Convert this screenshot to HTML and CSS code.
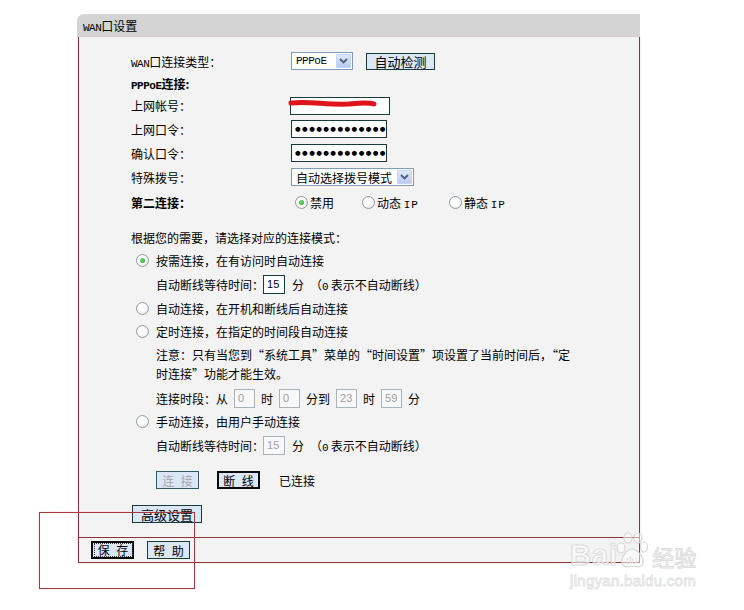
FILE: index.html
```html
<!DOCTYPE html>
<html lang="zh-CN">
<head>
<meta charset="utf-8">
<title>WAN口设置</title>
<link rel="stylesheet" href="styles.css">
</head>
<body>
<div class="page">
  <div class="panel">
    <div class="head"><span class="lat">WAN</span>口设置</div>
    <div class="body">
      <div class="main">
        <div class="row h24">
          <span class="lbl"><span class="lat">WAN</span>口连接类型：</span>
          <div class="ctl">
            <div class="sel w62"><span class="selv lat">PPPoE</span><span class="arr"><svg width="9" height="6" viewBox="0 0 9 6"><path d="M1 1 L4.5 4.5 L8 1" fill="none" stroke="#4d6185" stroke-width="1.8"/></svg></span></div>
            <span class="btn detect">自动检测</span>
          </div>
        </div>
        <div class="row h21">
          <span class="lbl b"><span class="lat">PPPoE</span>连接:</span>
        </div>
        <div class="row h23">
          <span class="lbl">上网帐号：</span>
          <div class="ctl">
            <div class="inp acct">
              <svg class="scribble" width="90" height="10" viewBox="0 0 90 10"><path d="M3 4 C20 2 40 6 60 5 C72 4 80 3 86 5" fill="none" stroke="#e0141a" stroke-width="5" stroke-linecap="round"/></svg>
            </div>
          </div>
        </div>
        <div class="row h24">
          <span class="lbl">上网口令：</span>
          <div class="ctl"><div class="inp pw"><span class="dotsw">●●●●●●●●●●●●●</span></div></div>
        </div>
        <div class="row h24">
          <span class="lbl">确认口令：</span>
          <div class="ctl"><div class="inp pw"><span class="dotsw">●●●●●●●●●●●●●</span></div></div>
        </div>
        <div class="row h24">
          <span class="lbl">特殊拨号：</span>
          <div class="ctl">
            <div class="sel w123"><span class="selv">自动选择拨号模式</span><span class="arr"><svg width="9" height="6" viewBox="0 0 9 6"><path d="M1 1 L4.5 4.5 L8 1" fill="none" stroke="#4d6185" stroke-width="1.8"/></svg></span></div>
          </div>
        </div>
        <div class="row h27">
          <span class="lbl b">第二连接：</span>
          <div class="ctl second">
            <span class="radio on"></span><span class="rl">禁用</span>
            <span class="radio r2"></span><span class="rl">动态 <span class="lat">IP</span></span>
            <span class="radio r3"></span><span class="rl">静态 <span class="lat">IP</span></span>
          </div>
        </div>

        <div class="row h22 mt10">
          <span class="intro">根据您的需要，请选择对应的连接模式：</span>
        </div>
        <div class="row h24 opt">
          <span class="radio on"></span><span class="ol">按需连接，在有访问时自动连接</span>
        </div>
        <div class="row h24 sub">
          <span>自动断线等待时间：</span><span class="box">15</span><span class="unit">分</span><span class="note">（<span class="lat">0</span> 表示不自动断线）</span>
        </div>
        <div class="row h24 opt">
          <span class="radio"></span><span class="ol">自动连接，在开机和断线后自动连接</span>
        </div>
        <div class="row h23 opt">
          <span class="radio"></span><span class="ol">定时连接，在指定的时间段自动连接</span>
        </div>
        <p class="warn">注意：只有当您到“系统工具”菜单的“时间设置”项设置了当前时间后，“定<br>时连接”功能才能生效。</p>
        <div class="row h22 sub times">
          <span>连接时段：从</span><span class="box dis">0</span><span>时</span><span class="box dis">0</span><span>分到</span><span class="box dis">23</span><span>时</span><span class="box dis">59</span><span>分</span>
        </div>
        <div class="row h24 opt">
          <span class="radio"></span><span class="ol">手动连接，由用户手动连接</span>
        </div>
        <div class="row h24 sub">
          <span>自动断线等待时间：</span><span class="box dis">15</span><span class="unit">分</span><span class="note">（<span class="lat">0</span> 表示不自动断线）</span>
        </div>
        <div class="row h22 sub btns mt12">
          <span class="btn small dis">连 接</span>
          <span class="btn small focus">断 线</span>
          <span class="status">已连接</span>
        </div>
        <div class="row h22 adv mt12">
          <span class="btn advb">高级设置</span>
        </div>
      </div>
      <div class="foot">
        <span class="btn small focus save"><span class="dots">保 存</span></span>
        <span class="btn small">帮 助</span>
      </div>
    </div>
  </div>
  <div class="annot"></div>
  <div class="wm">
    <div class="wm-top">
      <span class="wm-bai">Bai</span>
      <svg class="paw" width="32" height="38" viewBox="0 0 32 38">
        <g fill="rgba(255,255,255,0.5)" stroke="#d6d6d6" stroke-width="1.2">
          <ellipse cx="5" cy="16" rx="4" ry="5"/>
          <ellipse cx="12" cy="6" rx="4" ry="5"/>
          <ellipse cx="22" cy="6" rx="4" ry="5"/>
          <ellipse cx="28" cy="15" rx="3.5" ry="5"/>
          <path d="M16 17 C10 17 5 26 6 31 C7 36 12 35 16 34 C20 35 26 36 27 31 C28 26 22 17 16 17 Z"/>
        </g>
        <text x="10" y="32" font-family="Liberation Sans, sans-serif" font-size="10" fill="#e2e2e2">du</text>
      </svg>
      <span class="wm-jy">经验</span>
    </div>
    <div class="wm-url">jingyan.baidu.com</div>
  </div>
</div>
</body>
</html>
```
FILE: styles.css
```css
html, body {
  margin: 0;
  padding: 0;
  background: #ffffff;
}
body {
  font-family: "Noto Sans CJK SC", "Liberation Sans", sans-serif;
  font-size: 12px;
  color: #000;
}
.page {
  position: relative;
  width: 744px;
  height: 610px;
  padding: 14px 0 0 77px;
  box-sizing: border-box;
}
.lat {
  font-family: "Liberation Mono", monospace;
  font-size: 11px;
  letter-spacing: -0.5px;
}
.panel {
  width: 563px;
}
.head {
  height: 23px;
  line-height: 23px;
  background: #d4d4d4;
  border-top-left-radius: 7px;
  padding-left: 6px;
  font-size: 12px;
}
.body {
  margin-left: 1px;
  width: 562px;
  box-sizing: border-box;
  border-left: 1px solid #8a3434;
  border-right: 1px solid #8a3434;
  border-bottom: 1px solid #8a3434;
  background: #f3f3f3;
  box-shadow: 0 0 1px rgba(230, 120, 120, 0.6);
}
.main {
  height: 488px;
  border-bottom: 1px solid #8a3434;
  padding-top: 12px;
}
.row {
  display: flex;
  align-items: center;
  padding-left: 52px;
}
.h21 { height: 21px; }
.h22 { height: 22px; }
.h23 { height: 23px; }
.h24 { height: 24px; }
.h27 { height: 27px; }
.mt10 { margin-top: 10px; }
.mt12 { margin-top: 12px; }
.lbl {
  width: 160px;
  flex: none;
}
.b { font-weight: bold; }
.ctl {
  display: flex;
  align-items: center;
}
.sel {
  display: flex;
  align-items: center;
  justify-content: space-between;
  height: 18px;
  box-sizing: border-box;
  border: 1px solid #7f9db9;
  background: #fff;
  padding: 0 1px 0 4px;
}
.w62 { width: 62px; }
.w123 { width: 123px; }
.selv { white-space: nowrap; }
.arr {
  width: 15px;
  height: 14px;
  background: linear-gradient(#dfe8fb, #b8cbf0);
  border: 1px solid #c3d3fd;
  box-sizing: border-box;
  display: flex;
  align-items: center;
  justify-content: center;
  border-radius: 1px;
}
.btn {
  display: inline-flex;
  align-items: center;
  justify-content: center;
  box-sizing: border-box;
  height: 18px;
  background: #dbe6f7;
  border: 1px solid #173a3a;
  font-size: 12px;
  white-space: nowrap;
}
.detect {
  width: 69px;
  height: 17px;
  margin-left: 13px;
  font-size: 13px;
}
.inp {
  position: relative;
  height: 18px;
  box-sizing: border-box;
  background: #fff;
  border: 1px solid #173a3a;
  display: flex;
  align-items: center;
}
.acct { width: 100px; margin-left: -1px; }
.scribble {
  position: absolute;
  left: -3px;
  top: 1px;
}
.pw {
  width: 96px;
  padding-left: 3px;
}
.dotsw {
  font-family: "DejaVu Sans", sans-serif;
  font-size: 6.5px;
  letter-spacing: 1.4px;
  margin-right: -1.4px;
  white-space: nowrap;
}
.radio {
  width: 13px;
  height: 13px;
  box-sizing: border-box;
  border-radius: 50%;
  border: 1px solid #8e9aa6;
  background: radial-gradient(circle at 40% 40%, #ffffff 30%, #e4e4e0 100%);
  flex: none;
  display: inline-flex;
  align-items: center;
  justify-content: center;
}
.radio.on::after {
  content: "";
  width: 5px;
  height: 5px;
  border-radius: 50%;
  background: radial-gradient(circle at 40% 40%, #6fdc6f, #21a121);
}
.second { padding-left: 4px; }
.rl { margin-left: 2px; }
.r2 { margin-left: 28px; }
.r3 { margin-left: 30px; }
.second .lat { letter-spacing: 1px; }
.opt { padding-left: 57px; }
.ol { margin-left: 7px; }
.sub { padding-left: 77px; }
.box {
  display: inline-flex;
  align-items: center;
  width: 22px;
  height: 19px;
  box-sizing: border-box;
  background: #fff;
  border: 1px solid #173a3a;
  padding-left: 3px;
  font-family: "Liberation Sans", sans-serif;
  font-size: 11px;
}
.box.dis {
  border-color: #a8b4bc;
  color: #a0a0a0;
  background: #f8f8f8;
}
.sub .box { margin-left: -1px; }
.unit { margin-left: 7px; }
.note { margin-left: 6px; }
.warn {
  margin: 0 0 0 77px;
  line-height: 19px;
  padding-top: 2px;
  height: 42px;
  white-space: nowrap;
}
.times { gap: 6px; }
.times .box { margin-left: 0; width: 21px; }
.small {
  width: 43px;
  height: 18px;
  letter-spacing: 2px;
  padding-left: 2px;
}
.btn.dis {
  color: #a8a8a8;
  border-color: #2f5a64;
}
.btn.focus {
  border: 2px solid #0a0a0a;
}
.btns .focus { margin-left: 18px; }
.status { margin-left: 19px; }
.adv { padding-left: 53px; }
.advb {
  width: 70px;
  font-size: 13px;
}
.foot {
  height: 24px;
  display: flex;
  align-items: center;
  padding-left: 12px;
  gap: 13px;
}
.save { width: 43px; }
.dots {
  border: 1px dotted #333;
  padding: 0 2px 0 3px;
  line-height: 12px;
}
.annot {
  position: absolute;
  left: 39px;
  top: 512px;
  width: 156px;
  height: 77px;
  box-sizing: border-box;
  border: 1px solid #a23c3c;
  box-shadow: 0 0 1px rgba(230, 120, 120, 0.6);
}
.wm {
  position: absolute;
  left: 570px;
  top: 530px;
  width: 140px;
}
.wm-top {
  display: flex;
  align-items: flex-end;
  height: 40px;
}
.wm-bai {
  font-family: "Liberation Sans", sans-serif;
  font-weight: bold;
  font-size: 29px;
  line-height: 30px;
  color: rgba(255, 255, 255, 0.55);
  -webkit-text-stroke: 1px #dcdcdc;
  letter-spacing: 1px;
}
.paw { margin-left: -2px; }
.wm-jy {
  font-size: 22px;
  line-height: 28px;
  color: rgba(255, 255, 255, 0.55);
  -webkit-text-stroke: 1px #dcdcdc;
  margin-left: 4px;
}
.wm-url {
  font-family: "Liberation Sans", sans-serif;
  font-size: 15px;
  color: rgba(255, 255, 255, 0.6);
  -webkit-text-stroke: 0.8px #e0e0e0;
  margin-top: 2px;
  letter-spacing: 0.3px;
}
```
